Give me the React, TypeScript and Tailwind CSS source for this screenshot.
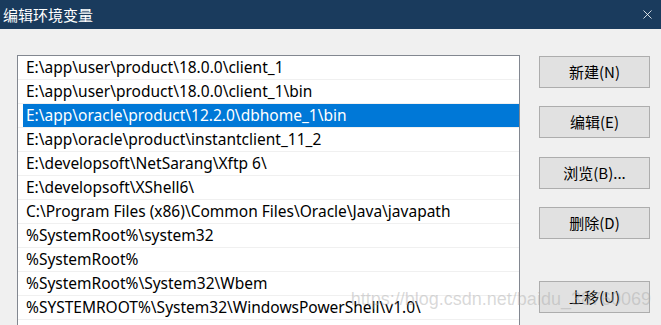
import { X } from "lucide-react";

const paths = [
  "E:\\app\\user\\product\\18.0.0\\client_1",
  "E:\\app\\user\\product\\18.0.0\\client_1\\bin",
  "E:\\app\\oracle\\product\\12.2.0\\dbhome_1\\bin",
  "E:\\app\\oracle\\product\\instantclient_11_2",
  "E:\\developsoft\\NetSarang\\Xftp 6\\",
  "E:\\developsoft\\XShell6\\",
  "C:\\Program Files (x86)\\Common Files\\Oracle\\Java\\javapath",
  "%SystemRoot%\\system32",
  "%SystemRoot%",
  "%SystemRoot%\\System32\\Wbem",
  "%SYSTEMROOT%\\System32\\WindowsPowerShell\\v1.0\\",
  "",
];

const buttons = [
  { label: "新建(N)", mt: "mt-0" },
  { label: "编辑(E)", mt: "mt-[18px]" },
  { label: "浏览(B)...", mt: "mt-[19px]" },
  { label: "删除(D)", mt: "mt-[18px]" },
  { label: "上移(U)", mt: "mt-[42px]" },
];

const App = () => {
  const selected = 2;

  return (
    <div className="relative w-[661px] h-[325px] overflow-hidden bg-[#f0f0f0] font-['Noto_Sans','Noto_Sans_CJK_SC',sans-serif]">
      <div className="h-[29px] bg-[#1a3b5d] flex items-center justify-between pl-[3px] pr-[6px]">
        <span className="text-white text-[15px] leading-none font-['Noto_Sans_CJK_SC',sans-serif]">
          编辑环境变量
        </span>
        <X className="w-[15px] h-[15px] text-white" strokeWidth={1.3} />
      </div>

      <div className="flex pl-[17px] pt-[26px]">
        <div className="w-[503px] h-[400px] border border-[#828790] bg-white">
          {paths.map((p, i) => (
            <div key={i} className="h-[24px] border-b border-[#f0f0f0] flex">
              <div
                className={
                  i === selected
                    ? "ml-[5px] flex-1 bg-[#0078d7] text-white pl-[3px] flex items-center text-[15.5px] whitespace-nowrap"
                    : "ml-[5px] flex-1 text-black pl-[3px] flex items-center text-[15.5px] whitespace-nowrap"
                }
              >
                {p}
              </div>
            </div>
          ))}
        </div>

        <div className="ml-[19px] pt-[1px] flex flex-col w-[111px]">
          {buttons.map((b) => (
            <button
              key={b.label}
              className={`${b.mt} h-[32px] bg-[#e1e1e1] border border-[#adadad] text-black text-[15px] font-['Noto_Sans_CJK_SC',sans-serif]`}
            >
              {b.label}
            </button>
          ))}
        </div>
      </div>

      <div className="absolute right-[10px] top-[290px] text-[18px] leading-none text-[rgba(170,170,170,0.45)] font-['Liberation_Sans',sans-serif] pointer-events-none">
        https://blog.csdn.net/baidu_38760069
      </div>
    </div>
  );
};

export default App;
